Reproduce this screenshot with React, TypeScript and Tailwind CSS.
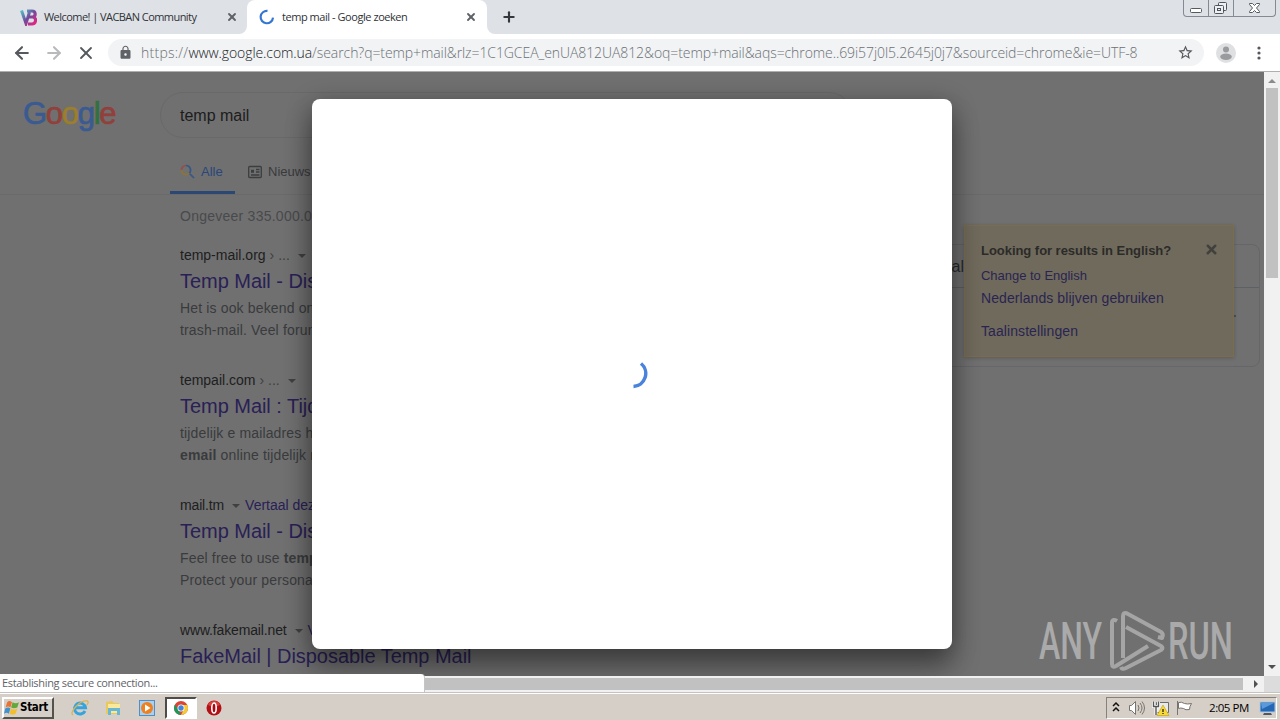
import type { ReactNode } from "react";
import { ArrowLeft, ArrowRight, Plus, X } from "lucide-react";
import { MdLock, MdStarBorder } from "react-icons/md";

const UI = "font-['Open_Sans','Noto_Sans',sans-serif]";

function TabStrip() {
  return (
    <div className={`flex h-[34px] bg-[#dee1e6] text-[#303236] ${UI}`}>
      <div className="flex w-[239px] items-center pl-5">
        <svg width="17" height="17" viewBox="0 0 17 17" fill="none">
          <defs>
            <linearGradient id="vb" x1="0" y1="0" x2="17" y2="17" gradientUnits="userSpaceOnUse">
              <stop offset="0.1" stopColor="#52b9c8" />
              <stop offset="0.5" stopColor="#704a9c" />
              <stop offset="0.85" stopColor="#e02583" />
            </linearGradient>
          </defs>
          <path d="M1.500 1.500l4.500 13L9.500 3" stroke="url(#vb)" strokeWidth="3" />
          <path d="M7 2h5c4 0 4 5 1 6 4 1 3 7-1 7H8M9 8h4" stroke="url(#vb)" strokeWidth="3.200" />
        </svg>
        <span className="ml-[7px] w-[182px] text-[11px] tracking-[-0.55px] whitespace-nowrap">
          Welcome! | VACBAN Community
        </span>
        <X className="size-3 shrink-0 text-[#5f6368]" strokeWidth={3.8} />
      </div>
      <div className="relative ml-2 flex w-60 items-center rounded-t-lg bg-white pl-3">
        <svg className="absolute bottom-0 -left-2 size-2" viewBox="0 0 8 8">
          <path d="M8 0v8H0a8 8 0 0 0 8-8" fill="#fff" />
        </svg>
        <svg className="absolute -right-2 bottom-0 size-2" viewBox="0 0 8 8">
          <path d="M0 0v8h8a8 8 0 0 1-8-8" fill="#fff" />
        </svg>
        <svg width="16" height="16" viewBox="0 0 16 16" fill="none" stroke="#3476d2" strokeWidth="2.200">
          <path d="M8.500 1.900A6.200 6.200 0 1 0 14 8.600" />
        </svg>
        <span className="ml-[7px] w-[183px] text-[11px] tracking-[-0.45px] whitespace-nowrap">
          temp mail - Google zoeken
        </span>
        <X className="size-3 shrink-0 text-[#5f6368]" strokeWidth={3.8} />
      </div>
      <Plus className="mt-[9px] ml-3.5 size-4 text-[#35373b]" strokeWidth={3.2} />
      <div className="mr-1 ml-auto flex h-[17px] w-[93px] rounded-b border border-t-0 border-[#858991]">
        <div className="w-[25px] border-r border-[#858991]">
          <svg width="24" height="16" fill="#fff" stroke="#555960">
            <rect x="6.500" y="8.500" width="11" height="4" rx="1" />
          </svg>
        </div>
        <div className="w-[25px] border-r border-[#858991]">
          <svg width="24" height="16" fill="#eef0f3" stroke="#50545b">
            <rect x="9.500" y="2.500" width="8" height="8" rx="1" />
            <rect x="5.500" y="5.500" width="9" height="8" rx="1" />
            <rect x="8.500" y="8.500" width="3" height="2" />
          </svg>
        </div>
        <svg width="41" height="16" fill="#fff" stroke="#555960">
          <path d="M15.500 3.500h3l2 2 2-2h3v1l-3 3.500 3 3.500v1h-3l-2-2-2 2h-3v-1l3-3.500-3-3.500z" />
        </svg>
      </div>
    </div>
  );
}

function Toolbar() {
  return (
    <div className="flex h-[38px] items-center border-b border-[#aeafb0] bg-white pl-3">
      <ArrowLeft className="size-5 text-[#55585c]" strokeWidth={2.5} />
      <ArrowRight className="ml-3 size-5 text-[#b9babc]" strokeWidth={2.5} />
      <X className="ml-3 size-5 text-[#55585c]" strokeWidth={2.2} />
      <div className="ml-3 flex h-[27px] w-[1096px] items-center rounded-full bg-[#f1f3f4] pl-[10px]">
        <MdLock className="size-[15px] text-[#5f6368]" />
        <span className={`ml-2 w-[1036px] text-[14px] font-light tracking-[-0.08px] whitespace-nowrap text-[#6b7075] ${UI}`}>
          <span className="tracking-[0.25px]">https://</span>
          <span className="text-[#202124]">www.google.com.ua</span>
          /search?q=temp+mail&amp;rlz=1C1GCEA_enUA812UA812&amp;oq=temp+mail&amp;aqs=chrome..69i57j0l5.2645j0j7&amp;sourceid=chrome&amp;ie=UTF-8
        </span>
        <MdStarBorder className="size-[17px] text-[#55585c]" />
      </div>
      <svg className="ml-3" width="20" height="20" viewBox="0 0 20 20">
        <circle cx="10" cy="10" r="10" fill="#dfe0e2" />
        <circle cx="10" cy="6.500" r="3" fill="#999b9e" />
        <ellipse cx="10" cy="13.800" rx="5.800" ry="3.200" fill="#999b9e" />
      </svg>
      <svg className="ml-5" width="6" height="16" fill="#55585c">
        <circle cx="3" cy="3" r="1.600" />
        <circle cx="3" cy="8" r="1.600" />
        <circle cx="3" cy="13" r="1.600" />
      </svg>
    </div>
  );
}

function GoogleLogo() {
  return (
    <div className="mt-[22px] ml-[23px] h-10 w-[93px] text-[31px] leading-10 tracking-[-1.3px] whitespace-nowrap [-webkit-text-stroke:0.7px]">
      <span className="text-[#3a5a92]">G</span>
      <span className="text-[#91403b]">o</span>
      <span className="text-[#9c7e2c]">o</span>
      <span className="text-[#3a5a92]">g</span>
      <span className="text-[#32713f]">l</span>
      <span className="text-[#91403b]">e</span>
    </div>
  );
}

type ResultProps = {
  site: string;
  crumb?: boolean;
  translate?: string;
  title: string;
  children?: ReactNode;
};

function Result({ site, crumb, translate, title, children }: ResultProps) {
  return (
    <div className="h-[125px] whitespace-nowrap">
      <div className="flex h-5 items-center text-[14px] text-[#1d1e20]">
        <span className={crumb ? "" : "tracking-[-0.15px]"}>{site}</span>
        {crumb && <span className="ml-1 text-[#3e4042]">› ...</span>}
        <span className="mt-0.5 mr-[5px] ml-2 border-x-4 border-t-4 border-x-transparent border-t-[#404040]" />
        <span className="text-[#292056]">{translate}</span>
      </div>
      <h3 className="mt-[3px] h-[26px] text-[20px] leading-[26px] tracking-[-0.04px] text-[#292056]">{title}</h3>
      <p className="mt-[3px] text-[14px] leading-[22px] tracking-[0.15px] text-[#393b3d]">{children}</p>
    </div>
  );
}

function LanguagePopup() {
  return (
    <div className="absolute top-[153px] left-[964px] h-[132px] w-[270px] border border-[#7b6d4c] bg-[#706a5c] pt-[15px] pl-4 text-[14px] text-[#292552] shadow-[0_1px_4px_rgba(0,0,0,0.2)]">
      <div className="flex h-5 items-center text-[13px] font-bold text-[#2b2b29]">
        <span className="w-[223px] tracking-[-0.04px]">Looking for results in English?</span>
        <X className="-mt-1 size-[15px] text-[#42413d]" strokeWidth={4} />
      </div>
      <div className="mt-[5px] h-5 text-[13px] leading-5 tracking-[-0.02px]">Change to English</div>
      <div className="mt-[2px] h-5 leading-5 tracking-[0.08px]">Nederlands blijven gebruiken</div>
      <div className="mt-[13px] h-5 leading-5 tracking-[0.08px]">Taalinstellingen</div>
    </div>
  );
}

function Watermark() {
  return (
    <svg className="absolute top-[536px] left-[1036px]" width="220" height="66" viewBox="0 0 220 66" fill="none">
      <g fill="#aaa" fontSize="52" fontWeight="500" className="font-['Roboto',sans-serif]">
        <text x="3" y="51" textLength="63" lengthAdjust="spacingAndGlyphs">ANY</text>
        <text x="132" y="51" textLength="65" lengthAdjust="spacingAndGlyphs">RUN</text>
      </g>
      <g stroke="#a5a5a5" strokeWidth="4" strokeLinejoin="round">
        <path d="M81 13q-5-3-5 2v41q0 4 4 2l32-20" />
        <path d="M87 50V9q0-6 5-3l33 18q3 2 1 6l-4-1" />
        <path d="M90 19l35 19q3 2 0 4L90 60q-4 2-5-1" />
      </g>
    </svg>
  );
}

function SearchPage() {
  return (
    <div className="relative h-full w-[1264px] overflow-hidden bg-[#707070] font-['Liberation_Sans',Arial,sans-serif]">
      <header className="flex h-[123px] border-b border-[#6a6a6a]">
        <GoogleLogo />
        <div className="ml-11 w-[692px] pt-5">
          <div className="flex h-[46px] items-center rounded-full border border-[#696969] pt-px pl-[19px] text-[16px] text-[#1c1c1c]">
            temp mail
          </div>
          <nav className="mt-[14px] flex h-[42px] pl-2.5 text-[13px] text-[#393b3d]">
            <div className="flex w-[65px] items-center gap-1.5 border-b-[3px] border-[#2b4773] pl-2.5 text-[#28477b]">
              <svg width="15" height="15" viewBox="0 0 15 15" fill="none" strokeWidth="1.700">
                <path d="M9.500 9.500l4.500 4.500" stroke="#365787" />
                <path d="M1.500 6A4.500 4.500 0 0 1 6 1.500" stroke="#93504a" />
                <path d="M6 1.500a4.500 4.500 0 0 1 3.200 7.700" stroke="#365787" />
                <path d="M1.500 6a4.500 4.500 0 0 0 7.700 3.200" stroke="#8c7438" />
              </svg>
              Alle
            </div>
            <div className="flex items-center gap-1.5 pb-[3px] pl-[13px]">
              <svg width="14" height="14" viewBox="0 0 14 14" fill="none" stroke="#3b3d3f" strokeWidth="1.300">
                <rect x="0.700" y="1.500" width="12.600" height="11" rx="1" />
                <path d="M3 5.500h3M3 7h3M8 4.500h3.500M8 7h3.500M3 10h8.500" />
              </svg>
              Nieuws
            </div>
          </nav>
        </div>
      </header>
      <div className="flex justify-between pr-1 pl-[180px]">
        <main className="w-[600px]">
          <p className="mt-[11px] h-5 text-[14px] leading-5 tracking-[0.25px] text-[#484a4c]">
            Ongeveer 335.000.000 resultaten
          </p>
          <div className="mt-[19px]">
            <Result site="temp-mail.org" crumb title="Temp Mail - Disposable Temporary Email">
              Het is ook bekend onder namen
              <br />
              trash-mail. Veel forums
            </Result>
            <Result site="tempail.com" crumb title="Temp Mail : Tijdelijk e-mailadres">
              tijdelijk e mailadres hier
              <br />
              <b>email</b> online tijdelijk mail
            </Result>
            <Result site="mail.tm" translate="Vertaal deze pagina" title="Temp Mail - Disposable Email">
              Feel free to use <b>temp mail</b>
              <br />
              Protect your personal email
            </Result>
            <Result site="www.fakemail.net" translate="Vertaal deze pagina" title="FakeMail | Disposable Temp Mail" />
          </div>
        </main>
        <aside className="mt-[49px] h-[123px] w-[380px] rounded-lg border border-[#646669] text-[16px] text-[#292b2d]">
          <div className="h-[43px] border-b border-[#5d6065]">
            <div className="w-[83px] text-right leading-[43px]">tal</div>
          </div>
          <div className="mt-[27px] mr-[23px] ml-auto size-0.5 bg-[#4b4d55]" />
        </aside>
      </div>
      <LanguagePopup />
      <div className="absolute top-[27px] left-[312px] flex h-[550px] w-[640px] items-center justify-center rounded-lg bg-white shadow-[0_5px_26px_rgba(0,0,0,0.32),0_20px_28px_rgba(0,0,0,0.3)]">
        <svg width="32" height="32" viewBox="0 0 32 32" fill="none" stroke="#4a83dc" strokeWidth="3.500">
          <path d="M25 5.500A13 13 0 0 1 17.500 28.500" />
        </svg>
      </div>
      <Watermark />
    </div>
  );
}

function VerticalScrollbar() {
  return (
    <div className="flex w-4 flex-col items-center bg-[#f1f1f1]">
      <div className="mt-[7px] mb-[5px] border-x-4 border-b-4 border-x-transparent border-b-[#8b8b8b]" />
      <div className="h-[190px] w-3 bg-[#c1c1c1]" />
      <div className="mt-auto mb-[7px] border-x-4 border-t-4 border-x-transparent border-t-[#505050]" />
    </div>
  );
}

function Taskbar() {
  return (
    <div className={`flex h-7 items-center border-t border-[#c6c2bd] bg-[#d6cfc7] pt-[2px] pl-0.5 shadow-[inset_0_1px_#fff] ${UI}`}>
      <button className="flex h-[22px] w-[52px] items-center border-2 border-t-white border-r-[#55514d] border-b-[#55514d] border-l-white text-black">
        <svg width="16" height="16" viewBox="0 0 15 15" className="shrink-0">
          <path d="M3 2q2-2 4.500 0L6 7Q4 5 1.500 7z" fill="#e87232" />
          <path d="M8 2q3 2 6 0l-1.500 5Q9 8.500 6.700 7z" fill="#62a83b" />
          <path d="M1.200 8Q4 6 6 8l-1.500 5Q2.500 11 0 13z" fill="#3f91cf" />
          <path d="M6.500 8q3 2 6 0L11 13q-3 1.500-5.800 0z" fill="#f1bf2d" />
        </svg>
        <span className="font-['DejaVu_Sans_Condensed','DejaVu_Sans',sans-serif] text-[11.500px] font-bold tracking-[-0.3px]">
          Start
        </span>
      </button>
      <svg className="ml-[17px]" width="18" height="18" viewBox="0 0 18 18" fill="none">
        <path d="M14 12A5.500 5.500 0 1 1 14.500 8.800H5" stroke="#35a3dd" strokeWidth="3" />
        <path d="M2 16Q-1 14 5 7.500T16.500 2Q18 3 16 6" stroke="#d6b554" strokeWidth="1.300" />
      </svg>
      <svg className="ml-[15px]" width="18" height="18" viewBox="0 0 18 18">
        <path d="M2 3l6-1 2 2h5v11H2z" fill="#e9c85e" />
        <path d="M4 5h12v9H4z" fill="#fae99b" />
        <path d="M4 16V9h12v7h-3v-4H7v4z" fill="#68b7d7" />
      </svg>
      <svg className="ml-4" width="18" height="18" viewBox="0 0 18 18">
        <rect x="1.500" y="1.500" width="15" height="15" fill="#a9d0ee" stroke="#528ec1" />
        <circle cx="9" cy="9" r="6" fill="#ee8020" />
        <path d="M7 5.500v7L12.500 9z" fill="#fff" />
      </svg>
      <div className="ml-[9px] flex h-[22px] w-8 items-center justify-center border-2 border-t-[#4e4b48] border-r-white border-b-white border-l-[#4e4b48] bg-white">
        <svg width="16" height="16" viewBox="0 0 16 16">
          <circle cx="8" cy="8" r="7" fill="#db4437" />
          <path d="M2 4.500l3.500 6L8 15A7 7 0 0 1 2 4.500" fill="#159b59" />
          <path d="M8 5h6.300A7 7 0 0 1 8 15l3-6z" fill="#f4ca35" />
          <circle cx="8" cy="8" r="3.500" fill="#fff" />
          <circle cx="8" cy="8" r="2.700" fill="#4285d8" />
        </svg>
      </div>
      <svg className="ml-[9px]" width="16" height="16" viewBox="0 0 16 16">
        <circle cx="8" cy="8" r="7.500" fill="#b40f14" />
        <path d="M2 5a6.500 6.500 0 0 1 12 0q-6 3-12 0" fill="#d9403c" />
        <ellipse cx="8" cy="8" rx="2.200" ry="5" fill="#a20b10" stroke="#fff" strokeWidth="1.600" />
      </svg>
      <div className="mr-[3px] ml-auto flex h-[22px] w-[171px] items-center border border-t-[#85817c] border-r-white border-b-white border-l-[#85817c] pl-[5px] text-black">
        <svg width="8" height="14" fill="none" stroke="#111" strokeWidth="1.500">
          <path d="M1 5l3-3 3 3M1 10l3-3 3 3" />
        </svg>
        <svg className="ml-2" width="18" height="16" viewBox="0 0 18 16" fill="#fff" stroke="#77736e">
          <path d="M1.500 5.500h2l4-4v13l-4-4h-2z" />
          <path d="M10 5q2 3 0 6M12 3q4 5 0 10M14 1.500q5 6.500 0 13" fill="none" />
        </svg>
        <svg className="ml-[6px]" width="18" height="16" viewBox="0 0 18 16">
          <path d="M4.500 2.500h12v10h-12z" fill="#e9e9e9" stroke="#686b6d" />
          <path d="M1.500 1.500v5h5v-5M4 6v9" fill="none" stroke="#fff" strokeWidth="3" />
          <path d="M1.500 1.500v5h5v-5M4 6v9" fill="none" stroke="#555" strokeWidth="1.400" />
          <path d="M11 5l6 10.500H5z" fill="#f9da30" stroke="#be9b20" strokeWidth=".6" />
          <path d="M11 9v3M11 13v1" stroke="#222" strokeWidth="1.300" />
        </svg>
        <svg className="ml-1.5" width="17" height="16" fill="#fff" stroke="#77736e">
          <path d="M1.500 1v14" />
          <path d="M2.500 2.500q3-1 6 1 3 1 7 0-2 3-2 6-4 1-6-1-3-1-5 0z" />
        </svg>
        <span className="ml-4 w-[50px] text-[11.500px] tracking-[-0.45px] whitespace-nowrap">2:05 PM</span>
        <svg className="shrink-0" width="17" height="16" viewBox="0 0 17 16">
          <rect x="1" y="2" width="15" height="10" fill="#2467b5" stroke="#afc8df" />
          <path d="M2 3h13L3 9z" fill="#5a9ada" />
          <path d="M5 13h7l1 2H4z" fill="#4f5964" />
        </svg>
      </div>
    </div>
  );
}

export default function App() {
  return (
    <div className="h-[720px] w-[1280px] overflow-hidden">
      <TabStrip />
      <Toolbar />
      <div className="flex h-[604px]">
        <SearchPage />
        <VerticalScrollbar />
      </div>
      <div className="relative flex h-4 items-center bg-[#f1f1f1]">
        <div className="h-3 w-[1243px] bg-[#c1c1c1]" />
        <div className="ml-[11px] border-y-4 border-l-4 border-y-transparent border-l-[#505050]" />
        <div className="ml-auto h-4 w-4 bg-[#dcdcdc]" />
        <div
          className={`absolute bottom-0 left-0 flex h-[18px] w-[425px] items-center rounded-tr border-r border-[#c5c5c5] bg-white pl-0.5 text-[11px] tracking-[-0.33px] text-[#5f6368] ${UI}`}
        >
          Establishing secure connection...
        </div>
      </div>
      <Taskbar />
    </div>
  );
}
